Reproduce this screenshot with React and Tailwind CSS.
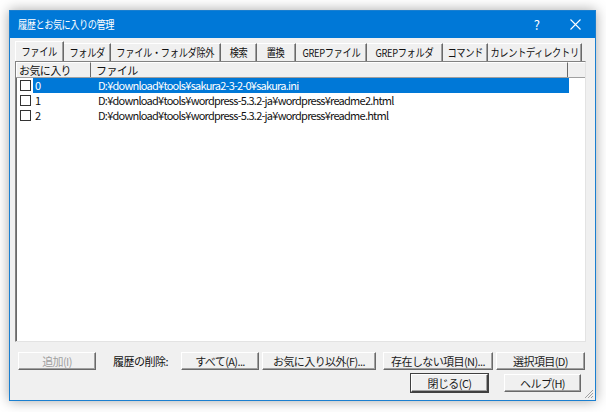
import React from "react";

const TABS = [
  { label: "ファイル", w: 49 },
  { label: "フォルダ", w: 47 },
  { label: "ファイル・フォルダ除外", w: 110 },
  { label: "検索", w: 36 },
  { label: "置換", w: 39 },
  { label: "GREPファイル", w: 71 },
  { label: "GREPフォルダ", w: 76 },
  { label: "コマンド", w: 45 },
  { label: "カレントディレクトリ", w: 94 },
];

const ROWS = [
  { n: "0", path: "D:¥download¥tools¥sakura2-3-2-0¥sakura.ini", sel: true },
  { n: "1", path: "D:¥download¥tools¥wordpress-5.3.2-ja¥wordpress¥readme2.html" },
  { n: "2", path: "D:¥download¥tools¥wordpress-5.3.2-ja¥wordpress¥readme.html" },
];

const font = { fontFamily: '"Noto Sans CJK JP", "Noto Sans", sans-serif' };

function Btn({ children, w, disabled, strong }) {
  return (
    <div
      className={`h-[18px] flex items-center justify-center text-[11px] leading-none whitespace-nowrap tracking-[-0.6px] bg-[#f0f0f0] border-t border-l border-white border-r border-b ${
        strong ? "border-r-[#404040] border-b-[#404040] shadow-[inset_-1px_-1px_#a0a0a0,0_0_0_1px_#404040]" : "border-r-[#696969] border-b-[#696969] shadow-[inset_-1px_-1px_#a0a0a0]"
      } ${disabled ? "text-[#a0a0a0]" : "text-[#1a1a1a]"}`}
      style={{ width: w }}
    >
      {children}
    </div>
  );
}

export default function App() {
  return (
    <div className="w-[606px] h-[412px] bg-white overflow-hidden" style={font}>
      <div className="ml-[9px] mt-[10px] w-[587px] h-[391px] bg-[#f0f0f0] border border-[#1a7fd0] shadow-[0_0_12px_rgba(0,0,0,0.35)] flex flex-col relative">
        <div className="h-[27px] bg-[#0078d7] flex items-center pl-[8px] text-white shrink-0">
          <span className="inline-block text-[11.5px] tracking-[-0.6px] scale-x-[0.8] origin-left whitespace-nowrap">履歴とお気に入りの管理</span>
          <span className="ml-auto mr-[30px] text-[13px]">?</span>
          <svg width="11" height="11" viewBox="0 0 11 11" className="mr-[14px]">
            <path d="M0.5 0.5 L10.5 10.5 M10.5 0.5 L0.5 10.5" stroke="#fff" strokeWidth="1.1" />
          </svg>
        </div>

        <div className="pl-[5px] pr-[9px] pt-[3px] flex flex-col">
          <div className="flex items-end h-[20px]">
            {TABS.map((t, i) => (
              <div
                key={t.label}
                className={`flex items-center justify-center whitespace-nowrap text-[11px] tracking-[-0.4px] text-[#111] bg-[#f0f0f0] border-r border-r-[#696969] shadow-[inset_-1px_0_#a0a0a0] ${
                  i === 0 ? "h-[20px] border-t border-l border-t-white border-l-white" : "h-[18px] border-t border-t-white"
                }`}
                style={{ width: t.w }}
              >
                <span className="inline-block scale-x-[0.84] origin-center">{t.label}</span>
              </div>
            ))}
          </div>

          <div className="h-[281px] bg-white border-l border-t border-[#828282] border-r border-r-[#e3e3e3] border-b border-b-[#e3e3e3] shadow-[inset_1px_1px_#696969] flex flex-col">
            <div className="h-[16px] flex shrink-0 bg-[#f0f0f0] border-b border-[#a0a0a0] text-[11px] tracking-[-0.6px] text-[#111]">
              <div className="w-[75px] pl-[2px] flex items-center border-r border-r-[#696969] border-t border-t-white border-l border-l-white">お気に入り</div>
              <div className="w-[477px] pl-[5px] flex items-center border-r border-r-[#696969] border-t border-t-white">ファイル</div>
              <div className="flex-1 border-t border-t-white"></div>
            </div>
            <div>
              {ROWS.map((r) => (
                <div key={r.n} className="h-[15px] flex items-center text-[11px] tracking-[-0.75px]">
                  <div className="w-[11px] h-[11px] ml-[4px] bg-white border border-[#333]" />
                  <div className={`ml-[2px] w-[536px] h-[15px] flex items-center ${r.sel ? "bg-[#0078d7] text-white" : "text-[#111]"}`}>
                    <span className="pl-[2px] w-[65px]">{r.n}</span>
                    <span>{r.path}</span>
                  </div>
                </div>
              ))}
            </div>
          </div>

          <div className="flex items-center mt-[10px] pl-[3px]">
            <Btn w={78} disabled>追加(I)</Btn>
            <span className="ml-[17px] w-[68px] text-[11px] tracking-[-0.5px] text-[#111]">履歴の削除:</span>
            <Btn w={78}>すべて(A)...</Btn>
            <div className="w-[3px]" />
            <Btn w={114}>お気に入り以外(F)...</Btn>
            <div className="w-[7px]" />
            <Btn w={110}>存在しない項目(N)...</Btn>
            <div className="w-[3px]" />
            <Btn w={89}>選択項目(D)</Btn>
          </div>
          <div className="flex items-center mt-[4px]">
            <div className="ml-[396px]">
              <Btn w={77} strong>閉じる(C)</Btn>
            </div>
            <div className="ml-[16px]">
              <Btn w={77}>ヘルプ(H)</Btn>
            </div>
          </div>
        </div>

        <svg width="10" height="10" viewBox="0 0 10 10" className="absolute right-[1px] bottom-[1px]">
          <path d="M9 1 L1 9 M9 4 L4 9 M9 7 L7 9" stroke="#a0a0a0" strokeWidth="1" />
        </svg>
      </div>
    </div>
  );
}
